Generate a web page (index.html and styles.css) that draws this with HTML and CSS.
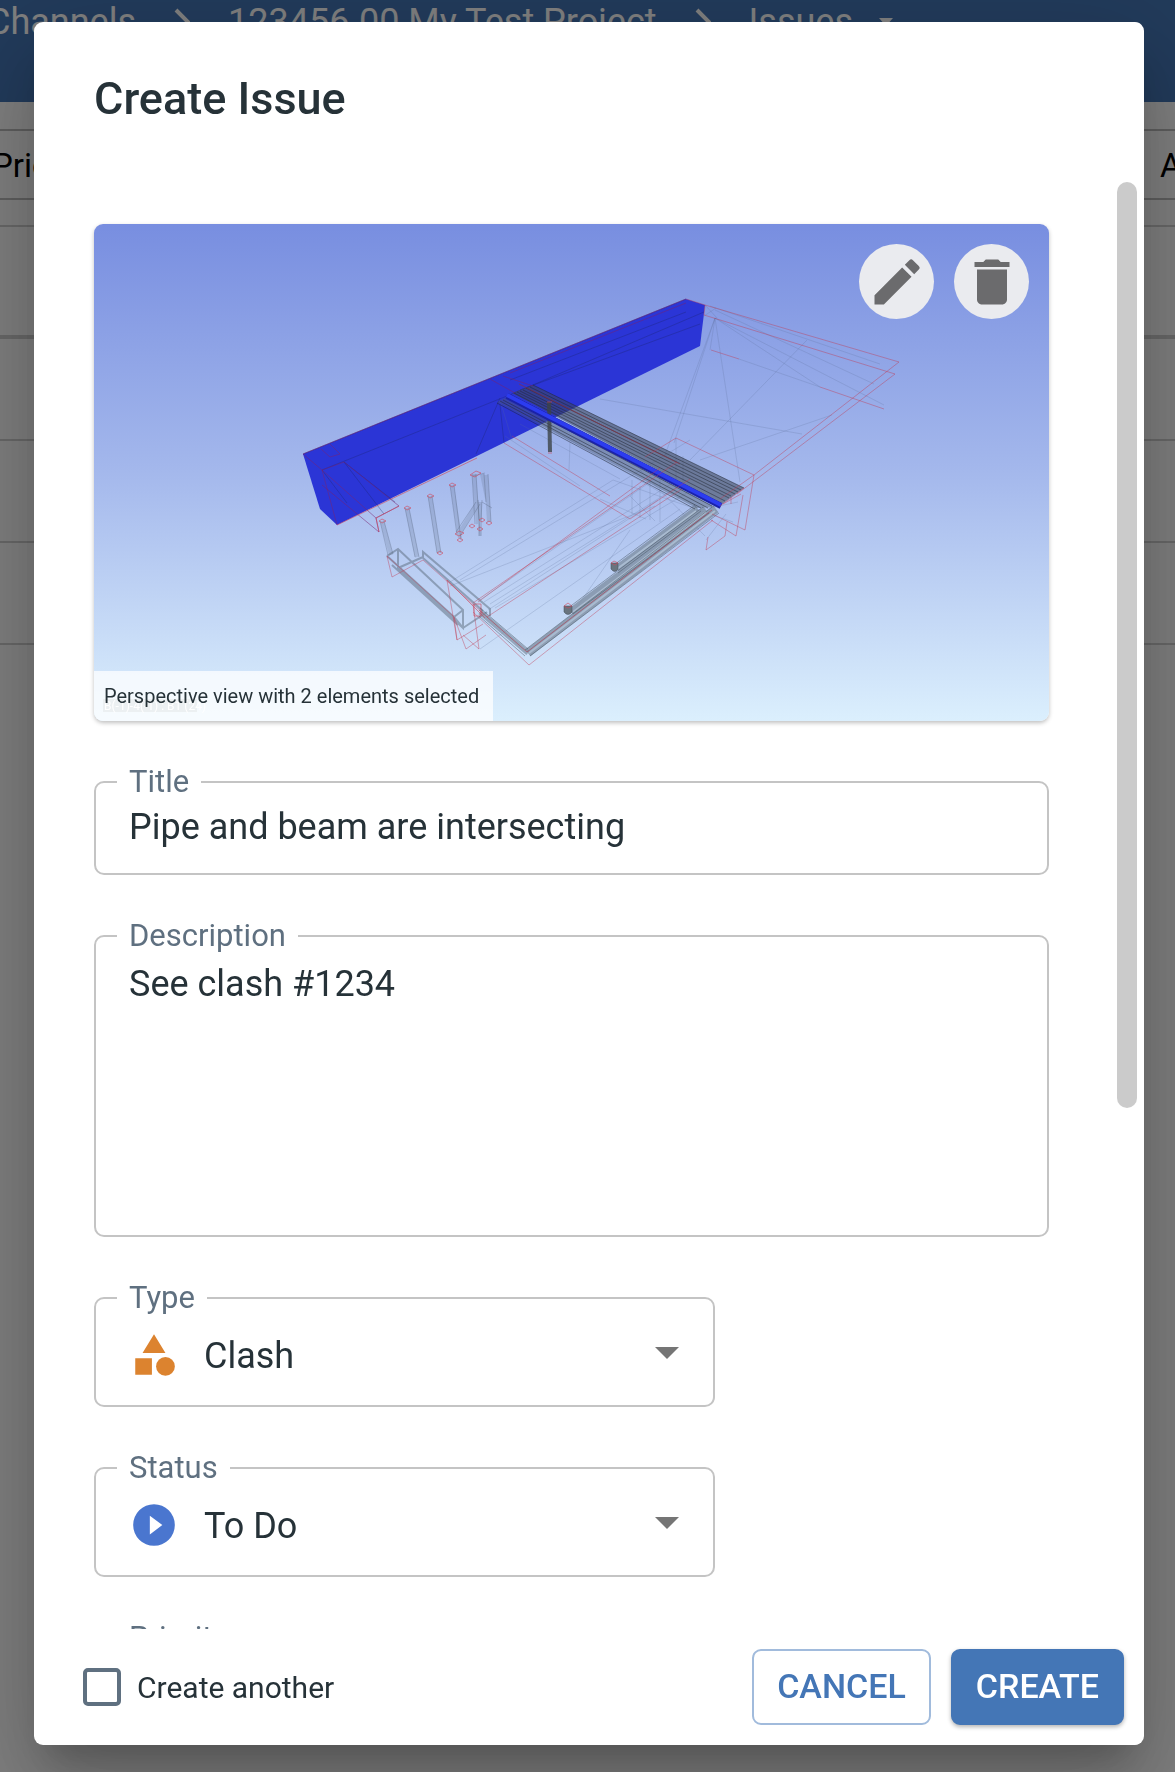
FILE: index.html
```html
<!DOCTYPE html>
<html lang="en">
<head>
<meta charset="utf-8">
<meta name="viewport" content="width=device-width, initial-scale=1">
<title>Create Issue</title>
<link rel="stylesheet" href="styles.css">
</head>
<body>
<div class="app">
  <header class="topbar">
    <nav class="crumbs">
      <a class="crumb" href="#">Channels</a>
      <svg class="crumb-sep" viewBox="0 0 16 28"><path d="M2 2l12 12L2 26"/></svg>
      <a class="crumb" href="#">123456.00 My Test Project</a>
      <svg class="crumb-sep" viewBox="0 0 16 28"><path d="M2 2l12 12L2 26"/></svg>
      <a class="crumb" href="#">Issues</a>
      <svg class="crumb-caret" viewBox="0 0 14 8"><path d="M0 0h14L7 8z"/></svg>
    </nav>
  </header>
  <main class="board">
    <div class="board-head"><span>Priority</span><span class="col-last">Assignee</span></div>
    <div class="row row-gap"></div>
    <div class="row row-group"></div>
    <div class="row"></div>
    <div class="row"></div>
    <div class="row"></div>
  </main>
</div>

<div class="backdrop">
  <form class="dialog" role="dialog" aria-labelledby="dialog-title">
    <h1 class="dialog-title" id="dialog-title">Create Issue</h1>
    <div class="dialog-body">
      <div class="scroller">
        <figure class="snapshot">
          <svg class="scene" viewBox="94 224 955 497" preserveAspectRatio="xMidYMid slice">
            <defs>
              <linearGradient id="sky" x1="0" y1="0" x2="0" y2="1">
                <stop offset="0" stop-color="#788ee0"/>
                <stop offset=".5" stop-color="#a4b8ec"/>
                <stop offset="1" stop-color="#dbeffd"/>
              </linearGradient>
            </defs>
            <path fill="url(#sky)" d="M94 224h955v497H94z"/>
            <!-- selected beam -->
            <path fill="#2b35d6" d="M303 454L686 299l19 6-5 41-363 179-17-16z"/>
            <g fill="none" stroke="#1d2470" stroke-opacity=".35">
              <path d="M322 470L507 396 704 312M303 454L686 299M344 462l40 52M322 470l25 33M344 462l51 40M500 405l4 38M476 454l24-56M510 380l176-68M520 390l180-66"/>
            </g>
            <!-- thin construction lines -->
            <g fill="none" stroke="#5a6d96" stroke-opacity=".22">
              <path d="M715 318l25 164M715 318l-50 137M715 318l-41 125M715 318l169 87M715 318l105 69M715 310l159 74M710 306l170 58M715 318l-5 32M705 305l12 13M716 308l-12 8M739 359l81 28M600 399l202 35M807 340L690 460M832 415l-132 45M676 438v50"/>
              <path d="M450 582l163-102M450 586l205-80M480 600l170-118M484 602l190-120M490 604l195-122M495 608l200-120M488 610l170-110M480 649l200-140M460 580l230-140M570 442l-1 28M500 400l12 40M505 436l75 50M520 424l100 55M535 420l130 75M613 480l120 42M632 480v34M640 486v32M650 480v40M660 478v44M640 470l65 66M575 610l55-80M655 521l-25-25M683 456v26M600 499l46 20M700 510l38-8M706 540l20-26"/>
            </g>
            <!-- grey columns on the left -->
            <g fill="none" stroke="#56657d" stroke-opacity=".2" stroke-width="4">
              <path d="M382 521l9 34M407 508l10 49M430 496l9 57M452 485l8 53M474 474l4 50M480 502v34M486 475l3 47M460 532l18-30M482 474l5 24"/>
            </g>
            <g fill="none" stroke="#4c5a70" stroke-opacity=".3">
              <path d="M380 521l8 34M384 521l9 33M405 508l10 49M409 508l10 49M428 496l9 57M432 496l9 57M450 485l7 50M454 485l7 55M472 474l3 50M476 474l3 46M484 474l2 28M488 474l3 48M478 500l2 36M482 500l-1 20M456 532l20-30M460 536l20-32M482 502l10 6M473 476l12-3"/>
            </g>
            <!-- grey troughs -->
            <g fill="none" stroke="#4f606e" stroke-opacity=".45" stroke-width="2">
              <path d="M387 556l11-7 65 61v18l-65-60v-19M387 556l67 61 9-7M454 617l9 11 24-16M398 568l25-11v-5l67 57v7M423 558l60 53M392 565l66 60"/>
            </g>
            <!-- pipe run -->
            <g fill="none" stroke-linecap="butt">
              <path stroke="#7e8ea3" stroke-opacity=".8" stroke-width="8" d="M698 509l-81 60M706 510L571 612M716 509L528 653"/>
              <path stroke="#7e8ea3" stroke-opacity=".7" stroke-width="5" d="M528 653l-48-41"/>
              <path stroke="#a9bbd0" stroke-width="2" d="M696 511l-79 58M706 512L573 612M715 511L529 653"/>
              <path stroke="#3f4b57" stroke-opacity=".45" d="M695 505l-81 60M701 511l-83 62M703 507l-135 101M709 513L573 614M712 507L525 650M719 513L530 656M528 649l-48-41M525 656l-46-40"/>
              <path stroke="#b03c4c" stroke-opacity=".6" d="M712 510L527 652M527 652l-48-42"/>
            </g>
            <g fill="#69747f" stroke="#3f4b57" stroke-opacity=".5"><path d="M611 563v6q4 5 7 0v-6zM564 606v6q4 5 8 0v-6z"/></g>
            <!-- pipe bundle -->
            <g fill="none">
              <path fill="#3c4658" fill-opacity=".55" d="M512 393l21-8 211 103-22 16z"/>
              <path fill="#4b586c" fill-opacity=".42" d="M497 402l10-5 208 110-19 1z"/>
              <path stroke="#20252f" stroke-opacity=".5" d="M533 385l211 103M530 387l211 103M526 388l212 104M523 390l212 104M520 391l211 105M517 392l212 106M514 393l211 108M511 395l211 109M507 398l205 108M503 400l205 108M500 401l201 107M497 403l198 106"/>
              <path stroke="#8d2e3e" stroke-opacity=".65" d="M519 384l161 80"/>
              <path stroke="#3c4347" stroke-opacity=".8" stroke-width="4" d="M549 402l1 50"/>
              <path stroke="#1b22a8" stroke-width="6" d="M507 396l214 110"/>
              <path stroke="#2c3cf0" stroke-width="4" d="M507 395l214 110"/>
            </g>
            <!-- red outlines -->
            <g fill="none" stroke="#c23a50" stroke-opacity=".42">
              <path d="M705 305l194 57-145 113-9 55-33-16M705 305l-1 10 191 59-158 120M711 350l28 9M820 387l64 22M645 457l31-19 78 37M743 495l-7 41-25-16M727 522l-2 14-19 14 2-13M754 475l-34 24M720 506l24-18M723 504l18-10M731 504v-7M686 299l19 6"/>
              <path d="M504 443l126 76 60-40M512 436l98 60M473 603l204-141M487 617l195-128M478 602l182-134M473 612l56 53 184-145"/>
              <path d="M387 556l5 21 31-17 60 53M387 556l67 61 12 32 20-14M447 580l10 60 26-16M473 604l6 45-16-14M454 617l3 23"/>
            </g>
            <g fill="none" stroke="#7a2270" stroke-opacity=".5">
              <path d="M303 454l19 16 15 55M322 470l54 48 23-12-55-44zM376 518l3 14-57-47M330 444l10 10-10 3-9-8M490 379l25 14M503 376l30 10M510 373l176-70M303 454L686 299"/>
            </g>
            <g fill="none" stroke="#d04458" stroke-opacity=".6">
              <path d="M337 525l140-67M376 518l23-12M376 518l3 14M379 521l3-2 4 2-4 2zM404 508l3-2 4 2-4 2zM427 496l3-2 4 2-4 2zM449 485l3-2 4 2-4 2zM470 475l6-4 5 2-6 4zM437 553l3-2 3 2-3 2zM455 534l4-3 5 2-5 3zM457 540l3-2 3 2-3 2zM479 520l3-2 3 2-3 2zM486 523l3-2 3 2-3 2zM477 529l3-2 3 2-3 2zM469 526l3-2 3 2-3 2zM611 563l3-2 4 2-3 2zM564 606l4-3 4 3-4 2zM547 402h5M548 453h4M447 580l38 38M474 604h7v12h-7z"/>
            </g>
            <!-- grid position readout -->
            <path fill="#8f979c" fill-opacity=".5" d="M103 699h94v13h-94z"/>
            <text class="readout" x="104" y="710">B(-1)-4(-1) : B1 (24)</text>
          </svg>
          <div class="snapshot-actions">
            <button class="round-btn" type="button" aria-label="Edit"><svg viewBox="0 0 24 24"><path d="M3 17.25V21h3.75L17.81 9.94l-3.75-3.75L3 17.25zM20.71 7.04a.996.996 0 0 0 0-1.41l-2.34-2.34a.996.996 0 0 0-1.41 0l-1.83 1.83 3.75 3.75 1.83-1.83z"/></svg></button>
            <button class="round-btn" type="button" aria-label="Delete"><svg viewBox="0 0 24 24"><path d="M6 19c0 1.1.9 2 2 2h8c1.1 0 2-.9 2-2V7H6v12zM19 4h-3.5l-1-1h-5l-1 1H5v2h14V4z"/></svg></button>
          </div>
          <figcaption class="snapshot-caption">Perspective view with 2 elements selected</figcaption>
        </figure>

        <div class="field">
          <label class="field-label" for="title">Title</label>
          <input class="control control-text" id="title" type="text" value="Pipe and beam are intersecting">
        </div>
        <div class="field">
          <label class="field-label" for="description">Description</label>
          <textarea class="control control-area" id="description">See clash #1234</textarea>
        </div>
        <div class="field field-select">
          <label class="field-label" for="type">Type</label>
          <svg class="kind-icon kind-clash" viewBox="0 0 24 24"><path d="M12 2l-5.500 9h11zM3 13.500h8v8H3z"/><circle cx="17.500" cy="17.500" r="4.500"/></svg>
          <select class="control control-select" id="type"><option>Clash</option></select>
          <svg class="select-caret" viewBox="0 0 24 12"><path d="M0 0h24L12 12z"/></svg>
        </div>
        <div class="field field-select">
          <label class="field-label" for="status">Status</label>
          <svg class="kind-icon kind-todo" viewBox="0 0 24 24"><path d="M12 2a10 10 0 1 0 0 20 10 10 0 0 0 0-20zM10 16.500v-9l6 4.500z"/></svg>
          <select class="control control-select" id="status"><option>To Do</option></select>
          <svg class="select-caret" viewBox="0 0 24 12"><path d="M0 0h24L12 12z"/></svg>
        </div>
        <div class="field field-select">
          <label class="field-label" for="priority">Priority</label>
          <select class="control control-select" id="priority"><option>Medium</option></select>
        </div>
      </div>
      <div class="scrollbar"><div class="thumb"></div></div>
    </div>
    <footer class="dialog-footer">
      <label class="another"><input class="tick" type="checkbox">Create another</label>
      <button class="btn btn-outline" type="button">CANCEL</button>
      <button class="btn btn-solid" type="submit">CREATE</button>
    </footer>
  </form>
</div>
</body>
</html>
```
FILE: styles.css
```css
* { box-sizing: border-box; }

html, body { height: 100%; }

body {
  margin: 0;
  overflow: hidden;
  background: #fff;
  color: #263238;
  font-family: Roboto, "Liberation Sans", sans-serif;
  font-size: 30px;
}

/* page behind the dialog */
.app { overflow: hidden; }
.topbar {
  height: 102px;
  background: #4476b6;
  overflow: hidden;
}
.crumbs {
  display: flex;
  align-items: center;
  height: 44px;
  margin-left: -13px;
  white-space: nowrap;
}
.crumb {
  color: #fff;
  font-size: 36px;
  line-height: 44px;
  text-decoration: none;
}
.crumb-sep {
  width: 16px;
  height: 28px;
  margin: 0 38px;
  fill: none;
  stroke: #fff;
  stroke-width: 4;
}
.crumb-caret {
  width: 14px;
  height: 8px;
  margin-left: 26px;
  fill: #fff;
}
.board-head {
  display: flex;
  justify-content: space-between;
  height: 71px;
  margin-top: 27px;
  border-top: 2px solid #bdbdbd;
  border-bottom: 2px solid #bdbdbd;
  color: #000;
  font-size: 33px;
  line-height: 69px;
  white-space: nowrap;
  overflow: hidden;
}
.board-head span { margin-left: -8px; }
.board-head .col-last { width: 15px; margin-left: 0; }
.row { height: 102px; border-bottom: 2px solid #d0d0d0; }
.row-gap { height: 27px; }
.row-group { height: 112px; border-bottom-width: 4px; }

/* dialog */
.backdrop {
  position: fixed;
  inset: 0;
  display: flex;
  padding: 22px 31px 27px 34px;
  background: rgba(0, 0, 0, .5);
}
.dialog {
  flex: 1;
  min-width: 0;
  display: flex;
  flex-direction: column;
  border-radius: 9px;
  background: #fff;
  box-shadow: 0 24px 33px -15px rgba(0, 0, 0, .2),
              0 52px 84px 7px rgba(0, 0, 0, .14),
              0 20px 100px 17px rgba(0, 0, 0, .12);
}
.dialog-title {
  margin: 0;
  padding: 47px 60px 51px;
  font-size: 45px;
  font-weight: 500;
  line-height: 60px;
}
.dialog-body {
  flex: 1;
  min-height: 0;
  display: flex;
  padding-right: 7px;
}
.scroller {
  flex: 1;
  min-width: 0;
  display: flex;
  flex-direction: column;
  gap: 60px;
  padding: 44px 68px 0 60px;
  overflow: hidden;
}
.scrollbar { width: 20px; padding-top: 2px; }
.thumb { height: 64%; border-radius: 10px; background: #cbcbcb; }

/* snapshot */
.snapshot {
  position: relative;
  flex: none;
  margin: 0;
  border-radius: 9px;
  overflow: hidden;
  box-shadow: 0 2px 4px rgba(0, 0, 0, .25);
}
.scene { display: block; width: 100%; height: 497px; }
.readout { fill: #fff; font-size: 12px; }
.snapshot-actions {
  position: absolute;
  top: 20px;
  right: 20px;
  display: flex;
  gap: 20px;
}
.round-btn {
  display: grid;
  place-items: center;
  width: 75px;
  height: 75px;
  padding: 0;
  border: 0;
  border-radius: 50%;
  background: #eaebef;
}
.round-btn svg { width: 60px; height: 60px; fill: #6b6b6d; }
.snapshot-caption {
  position: absolute;
  left: 0;
  bottom: 0;
  padding: 0 14px 0 10px;
  background: rgba(255, 255, 255, .75);
  font-size: 20px;
  line-height: 50px;
}

/* form fields */
.field {
  position: relative;
  flex: none;
  display: flex;
  border: 2px solid #c4c4c4;
  border-radius: 10px;
}
.field-label {
  position: absolute;
  top: -19px;
  left: 21px;
  padding: 0 12px;
  background: #fff;
  color: #5f7080;
  font-size: 31px;
  line-height: 36px;
}
.control {
  flex: 1;
  min-width: 0;
  height: 90px;
  padding: 0 33px;
  border: 0;
  outline: 0;
  background: none;
  color: #263238;
  font: inherit;
  font-size: 36px;
  line-height: 40px;
}
.control-text { padding-bottom: 2px; }
.control-area { height: 298px; padding-top: 27px; resize: none; }
.field-select {
  align-items: center;
  width: 65%;
  height: 110px;
}
.kind-icon { width: 50px; height: 50px; margin: 6px 0 0 33px; }
.kind-clash { fill: #dc832f; }
.kind-todo { fill: #4a76cf; }
.control-select { appearance: none; padding: 8px 24px 0 25px; }
.select-caret {
  width: 24px;
  height: 12px;
  margin: 2px 34px 0 0;
  fill: #757575;
  pointer-events: none;
}

/* footer */
.dialog-footer {
  display: flex;
  align-items: center;
  gap: 20px;
  height: 116px;
  padding: 0 20px 0 49px;
}
.another {
  flex: 1;
  display: flex;
  align-items: center;
  gap: 16px;
  font-size: 30px;
}
.tick {
  appearance: none;
  width: 38px;
  height: 38px;
  margin: 0;
  border: 4px solid #5f7080;
  border-radius: 5px;
}
.btn {
  height: 76px;
  padding: 0 23px 2px;
  border: 2px solid #a1bbdc;
  border-radius: 9px;
  background: #fff;
  color: #4476b6;
  font: inherit;
  font-size: 34px;
  font-weight: 500;
}
.btn-solid {
  border-color: #4476b6;
  background: #4476b6;
  color: #fff;
  box-shadow: 0 2px 4px rgba(0, 0, 0, .3);
}
```
